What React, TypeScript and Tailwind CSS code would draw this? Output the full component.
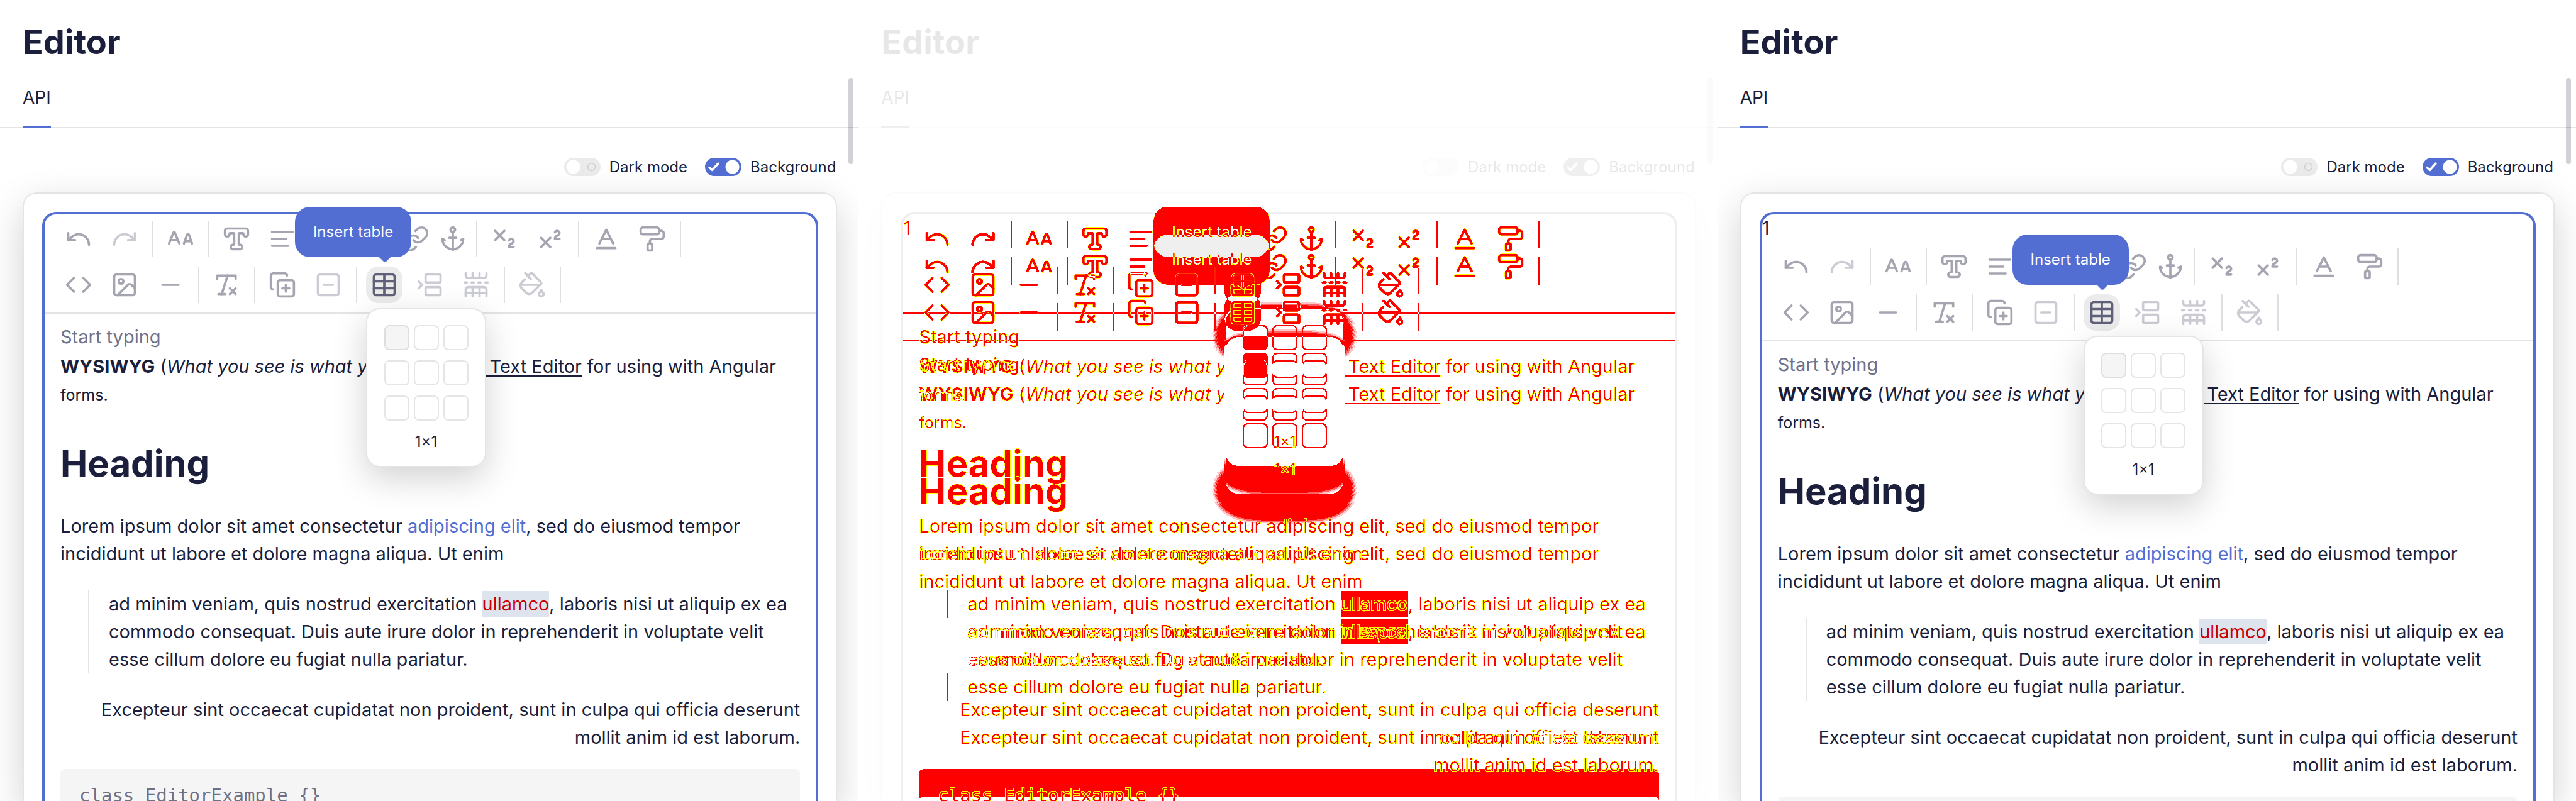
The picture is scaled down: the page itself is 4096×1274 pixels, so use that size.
import React from "react";
import {
  ALargeSmall,
  Anchor,
  Baseline,
  BetweenHorizontalStart,
  Code,
  CopyPlus,
  Image as ImageIcon,
  Link,
  List,
  Minus,
  PaintBucket,
  PaintRoller,
  Quote,
  Redo,
  RemoveFormatting,
  SquareMinus,
  Subscript,
  Superscript,
  Table,
  TableRowsSplit,
  TypeOutline,
  Undo,
} from "lucide-react";

type IconType = React.ComponentType<{ className?: string }>;

function AlignLines({ className }: { className?: string }) {
  return (
    <svg className={className} viewBox="0 0 24 24" fill="none" stroke="currentColor" strokeWidth="2" strokeLinecap="round">
      <path d="M3 6h18M3 12h12M3 18h14" />
    </svg>
  );
}

function Tool({ icon: Icon, label, disabled, narrow }: { icon: IconType; label: string; disabled?: boolean; narrow?: boolean }) {
  return (
    <button
      type="button"
      aria-label={label}
      disabled={disabled}
      className={`flex h-[58px] shrink-0 items-center justify-center ${narrow ? "w-11" : "w-[58px]"} ${
        disabled ? "text-[#cbccd3]" : "text-[#a4a5b1]"
      }`}
    >
      <Icon className="size-11 shrink-0" />
    </button>
  );
}

function Separator() {
  return <span className="-mr-px h-[58px] w-0.5 shrink-0 bg-[#dfdfdf]" />;
}

function TablePicker() {
  return (
    <div className="absolute top-full left-0 z-10 mt-2 flex w-[191px] flex-col items-center rounded-[22px] border-2 border-[#e5e5e5] bg-white pt-[25px] pb-5 shadow-[0_18px_54px_rgba(0,0,0,0.18)]">
      <div className="grid grid-cols-3 gap-x-[7px] gap-y-4">
        {Array.from({ length: 9 }, (_, i) => (
          <button
            key={i}
            type="button"
            aria-label={`${Math.floor(i / 3) + 1}×${(i % 3) + 1}`}
            className={`size-10 rounded-lg border-2 ${i === 0 ? "border-[#dedede] bg-[#f5f5f5]" : "border-[#e5e5e5]"}`}
          />
        ))}
      </div>
      <div className="mt-4 text-2xl leading-[36px] text-[#1b1f3b]">1×1</div>
    </div>
  );
}

function TableTool() {
  return (
    <div className="relative z-10 shrink-0">
      <button
        type="button"
        aria-label="Insert table"
        className="flex size-[58px] items-center justify-center rounded-[20px] bg-[#ebebeb] text-[#5f6178]"
      >
        <Table className="size-11" />
      </button>
      <div
        role="tooltip"
        className="absolute -right-3.5 bottom-[73px] z-20 flex h-20 w-[185px] items-center justify-center rounded-3xl bg-[#526ed3] text-2xl text-white"
      >
        Insert table
        <svg className="absolute top-full right-8 h-2 w-5" viewBox="0 0 20 8">
          <path d="M0 0h20l-2 1-6 6q-2 2-4 0L2 1z" fill="#526ed3" />
        </svg>
      </div>
      <TablePicker />
    </div>
  );
}

function Toolbar() {
  return (
    <div className="flex flex-col gap-[15px] border-b-2 border-[#e4e4e4] px-[25px] pt-2.5 pb-[15px]">
      <div className="flex gap-[15px]">
        <Tool icon={Undo} label="Undo" />
        <Tool icon={Redo} label="Redo" disabled />
        <Separator />
        <Tool icon={ALargeSmall} label="Font size" />
        <Separator />
        <Tool icon={TypeOutline} label="Font style" />
        <Tool icon={AlignLines} label="Justify" />
        <Tool icon={List} label="List" />
        <Tool icon={Quote} label="Quote" />
        <Tool icon={Link} label="Link" narrow />
        <Tool icon={Anchor} label="Anchor" narrow />
        <Separator />
        <Tool icon={Subscript} label="Subscript" />
        <Tool icon={Superscript} label="Superscript" />
        <Separator />
        <Tool icon={Baseline} label="Text color" />
        <Tool icon={PaintRoller} label="Background color" />
        <Separator />
      </div>
      <div className="flex gap-[15px]">
        <Tool icon={Code} label="Code" />
        <Tool icon={ImageIcon} label="Image" />
        <Tool icon={Minus} label="Horizontal line" />
        <Separator />
        <Tool icon={RemoveFormatting} label="Clear" />
        <Separator />
        <Tool icon={CopyPlus} label="Insert group" />
        <Tool icon={SquareMinus} label="Remove group" disabled />
        <Separator />
        <TableTool />
        <Tool icon={BetweenHorizontalStart} label="Merge cells" disabled />
        <Tool icon={TableRowsSplit} label="Split cells" disabled />
        <Separator />
        <Tool icon={PaintBucket} label="Cell color" disabled />
        <Separator />
      </div>
    </div>
  );
}

function Content() {
  return (
    <div className="px-[25px] pt-[15px] text-[29px] leading-[44px] text-[#1b1f3b]">
      <p className="text-[#70728a]">Start typing</p>
      <p className="mt-[3px]">
        <b>WYSIWYG</b> (<i>What you see is what you get</i>) -{" "}
        <a href="#editor" className="underline underline-offset-4">Rich Text Editor</a> for using with Angular
        <br />
        <span className="text-[25px] leading-none">forms.</span>
      </p>
      <h2 className="mt-14 text-[58px] leading-[64px] font-bold">Heading</h2>
      <p className="mt-[46px]">
        Lorem ipsum dolor sit amet consectetur{" "}
        <a href="#elit" className="text-[#526ed3]">adipiscing elit</a>, sed do eiusmod tempor
        <br />
        incididunt ut labore et dolore magna aliqua. Ut enim
      </p>
      <blockquote className="mt-9 ml-11 border-l-2 border-[#e4e4e4] pl-[31px]">
        ad minim veniam, quis nostrud exercitation <span className="bg-[#dde4ed] py-[3px] text-[#c90000]">ullamco</span>, laboris nisi ut aliquip ex ea
        <br />
        commodo consequat. Duis aute irure dolor in reprehenderit in voluptate velit
        <br />
        esse cillum dolore eu fugiat nulla pariatur.
      </blockquote>
      <p className="mt-9 text-right">
        Excepteur sint occaecat cupidatat non proident, sunt in culpa qui officia deserunt
        <br />
        mollit anim id est laborum.
      </p>
      <pre className="mt-7 rounded-lg bg-[#f5f5f5] px-[30px] py-5 font-['DejaVu_Sans_Mono',monospace] text-[29px] leading-[44px] text-[#717186]">
        class EditorExample {"{}"}
      </pre>
    </div>
  );
}

function EditorBody({ counter }: { counter?: boolean }) {
  return (
    <>
      {counter && <div className="h-11 text-[29px] leading-[44px] text-[#1b1f3b]">1</div>}
      <Toolbar />
      <Content />
    </>
  );
}

function Switch({ label, on }: { label: string; on?: boolean }) {
  return (
    <label className="flex items-center gap-3.5">
      <span className="grid">
        <input
          type="checkbox"
          defaultChecked={on}
          className="col-start-1 row-start-1 h-[29px] w-[58px] appearance-none rounded-full bg-[#ebebeb] checked:bg-[#526ed3]"
        />
        <svg className="pointer-events-none col-start-1 row-start-1 h-[29px] w-[58px]" viewBox="0 0 58 29" fill="none">
          {on ? (
            <>
              <circle cx="43.5" cy="14.5" r="11" fill="white" />
              <path d="M7 15.5l4.5 4L21 9" stroke="white" strokeWidth="3.5" strokeLinecap="round" strokeLinejoin="round" />
            </>
          ) : (
            <>
              <circle cx="14.5" cy="14.5" r="11" fill="white" />
              <circle cx="43.5" cy="14.5" r="6" stroke="#cfcfcf" strokeWidth="1.5" />
            </>
          )}
        </svg>
      </span>
      {label}
    </label>
  );
}

function Screen({ faded, children }: { faded?: boolean; children: React.ReactNode }) {
  return (
    <section className="relative flex h-screen min-w-0 flex-col overflow-hidden bg-white">
      <div className={faded ? "opacity-10 grayscale" : ""}>
        <h1 className="px-9 pt-[37px] text-[54px] leading-[60px] font-bold">Editor</h1>
        <nav className="mt-5 flex h-[87px] border-b-2 border-[#e4e4e4] px-9">
          <a href="#api" className="-mb-0.5 border-b-4 border-[#526ed3] pt-4 text-[28px] leading-[44px]">
            API
          </a>
        </nav>
        <div className="mt-10 flex h-[43px] items-center justify-end gap-7 pr-9 text-2xl">
          <Switch label="Dark mode" />
          <Switch label="Background" on />
        </div>
        <div className="absolute top-31 right-2 h-[137px] w-2 rounded-full bg-[#1b1f3b]/20" />
      </div>
      <div
        className={`mt-[19px] mr-[34px] ml-9 min-h-0 flex-1 rounded-t-[22px] border-2 border-b-0 pt-[29px] pr-7 pl-[29px] ${
          faded ? "border-[#fbfbfb] shadow-[0_20px_60px_rgba(0,0,0,0.02)]" : "border-[#e4e4e4] shadow-[0_20px_60px_rgba(0,0,0,0.18)]"
        }`}
      >
        <div className={`h-full rounded-t-[22px] border-4 border-b-0 ${faded ? "border-[#efefef]" : "border-[#526ed3]"}`}>
          {children}
        </div>
      </div>
    </section>
  );
}

/* Paints changed pixels red, and yellow where the amount of change falls off at a shape's rim. */
function DiffFilter() {
  return (
    <svg className="absolute size-0" aria-hidden="true">
      <filter id="pixel-diff" x="-5%" y="-5%" width="110%" height="110%" colorInterpolationFilters="sRGB">
        <feColorMatrix in="SourceGraphic" result="changed" values="0 0 0 0 1  0 0 0 0 0  0 0 0 0 0  33 33 33 0 -2.5" />
        <feColorMatrix in="SourceGraphic" result="amount" values="0 0 0 0 1  0 0 0 0 1  0 0 0 0 1  0.333 0.333 0.333 0 0" />
        <feMorphology in="amount" operator="dilate" radius="1" result="peak" />
        <feComposite in="peak" in2="amount" operator="arithmetic" k1="0" k2="1" k3="-1" k4="0" result="falloff" />
        <feColorMatrix in="falloff" result="rim" values="0 0 0 0 1  0 0 0 0 1  0 0 0 0 0  0 0 0 8 -0.9" />
        <feComposite in="rim" in2="changed" operator="in" result="rimInside" />
        <feMerge>
          <feMergeNode in="changed" />
          <feMergeNode in="rimInside" />
        </feMerge>
      </filter>
    </svg>
  );
}

export default function App() {
  return (
    <main className="grid h-screen grid-cols-3 overflow-hidden bg-white font-['Inter',sans-serif] text-[#1b1f3b]">
      <DiffFilter />
      <Screen>
        <EditorBody />
      </Screen>
      <Screen faded>
        <div className="relative">
          <div className="absolute top-8 left-[400px] h-[37px] w-[185px] rounded-[18px] bg-[#efefef]" />
          <div className="isolate grid [filter:url(#pixel-diff)]">
            <div className="isolate col-start-1 row-start-1 bg-white pb-11">
              <EditorBody />
            </div>
            <div className="isolate col-start-1 row-start-1 bg-white mix-blend-difference">
              <EditorBody counter />
            </div>
          </div>
        </div>
      </Screen>
      <Screen>
        <EditorBody counter />
      </Screen>
    </main>
  );
}
